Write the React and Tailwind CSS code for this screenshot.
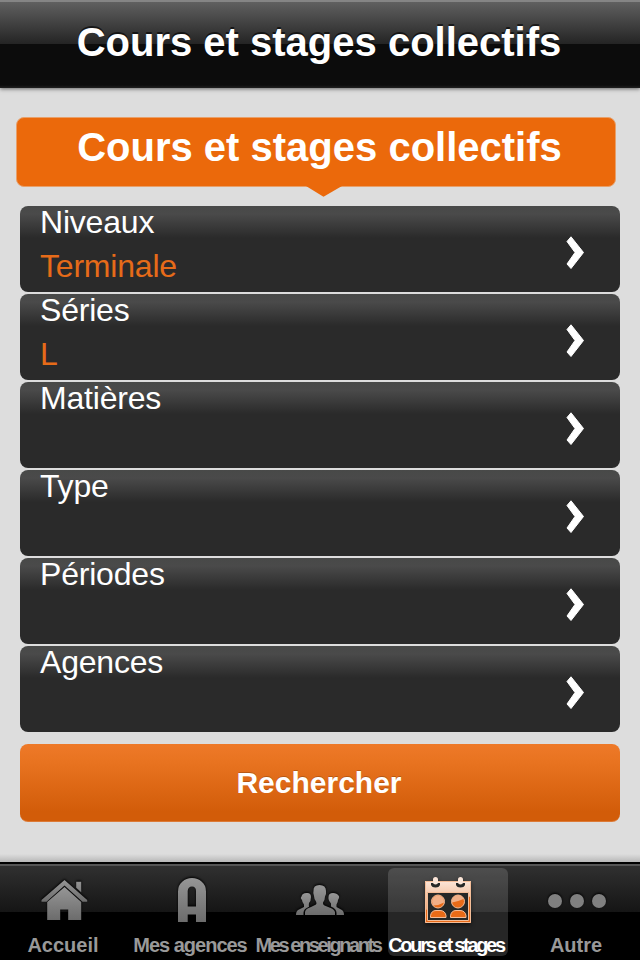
const fields = [
  { label: "Niveaux", value: "Terminale" },
  { label: "Séries", value: "L" },
  { label: "Matières", value: "" },
  { label: "Type", value: "" },
  { label: "Périodes", value: "" },
  { label: "Agences", value: "" },
];

function Gradient({ id }) {
  return (
    <linearGradient id={id} x1="0" y1="0" x2="0" y2="1">
      <stop offset="0" stopColor="#969696" />
      <stop offset="1" stopColor="#6c6c6c" />
    </linearGradient>
  );
}

function HomeIcon() {
  return (
    <svg viewBox="0 0 48 48" className="h-12 w-12 drop-shadow-[0_-1px_1px_#000]">
      <defs><Gradient id="home" /></defs>
      <g fill="url(#home)">
        <path d="M24.500 4 47.200 24v1.800h-4.700L24.500 9.500 6.500 25.800H1.500V24zM36.200 5.700h5v10.500l-5-4.500z" />
        <path d="M24.500 11 41.200 26V44H28.200V33.500h-8V44H7.200V26z" />
      </g>
    </svg>
  );
}

function AgencyIcon() {
  return (
    <svg viewBox="0 0 48 48" className="h-12 w-12 drop-shadow-[0_-1px_1px_#000]">
      <defs><Gradient id="agency" /></defs>
      <path fill="url(#agency)" fillRule="evenodd" d="M10 46V15.500Q10 9 14.500 5.500Q18 2 24 2Q30 2 33.500 5.500Q38 9 38 15.500V46H28V38.500H19.700V46zM19.700 30.500H28V15q0-4.500-4-4.500t-4.300 4.500z" />
    </svg>
  );
}

function TeachersIcon() {
  return (
    <svg viewBox="0 0 48 48" className="h-12 w-12 drop-shadow-[0_-1px_1px_#000]">
      <defs><Gradient id="people" /></defs>
      <g fill="url(#people)">
        <path d="M9 39V36Q9.500 32.500 15 31L20 28.500Q21 27.500 20 25.500Q18 23 18 20Q16.800 17 17.500 15Q17 9 23.500 9Q30 9 30 15Q30.500 18 29 20.500Q29 24 27 26.500Q26.500 28.500 28.500 29.500L34 31.700Q38 33 39 36V39z" />
        <path d="M0 39Q0 34.500 3 33.500L8 31V28.500Q6 26 6 24Q4 22 5.500 20.500Q6 17 10.500 17Q15 16.500 15 21Q15 25 13 27Q12.500 30 13 30.700Q7.500 32.700 7.500 37V39z" />
        <path d="M48 39Q48 34.500 45 33.500L40.500 31V28.500Q42 26 42 24Q44 21 42.500 19.500Q41 17 37 17Q32.500 17 32.500 21Q32 24 35 27.500V30.500Q40.500 32.500 40.500 37V39z" />
      </g>
    </svg>
  );
}

function CalendarIcon() {
  return (
    <svg viewBox="0 0 50 50" className="h-[50px] w-[50px] drop-shadow-[0_2px_2px_#0008]">
      <defs>
        <linearGradient id="paper" x1="0" y1="0" x2="0" y2="1">
          <stop offset="0" stopColor="#fbe5d8" />
          <stop offset="1" stopColor="#efa878" />
        </linearGradient>
      </defs>
      <path fill="#e96b18" d="M2 5h46v42H2z" />
      <path fill="url(#paper)" d="M2 5h46v15Q33 28 2 34z" />
      <path fill="none" stroke="#f4bd98" d="M2.500 5.500h45v41h-45z" />
      <path fill="#262827" stroke="#f4bd98" d="M4.500 16.500h41v28h-41z" />
      <path fill="#262827" d="M8 7h9v2q-1 2.500-4.500 2.500T8 9zM33 7h9v2q-1 2.500-4.500 2.500T33 9z" />
      <path fill="#fbe5d8" d="M10 3.500Q10 1 12.500 1T15 3.500v3q0 2-2.500 2T10 6.500zM35 3.500Q35 1 37.500 1T40 3.500v3q0 2-2.500 2T35 6.500z" />
      <g fill="#e96b18" stroke="#f4bd98">
        <circle cx="15" cy="25.500" r="6.500" />
        <circle cx="35" cy="25.500" r="6.500" />
        <path d="M7.500 41.500v-2q1-5 5.500-5h4q5 0 6 5v2zM27.500 41.500v-2q1-5 5.500-5h4q5 0 6 5v2z" />
      </g>
      <path fill="#f2b088" d="M9 25.500a6 6 0 0 1 12 0v1Q16 29.500 10 29.500zM29 24a6 6 0 0 1 11.500-1Q35 25.500 29 26.500z" />
    </svg>
  );
}

function MoreIcon() {
  return (
    <svg viewBox="0 0 60 48" className="h-12 w-[60px] drop-shadow-[0_-1px_1px_#000]">
      <g fill="#808080">
        <circle cx="9" cy="25" r="7" />
        <circle cx="31" cy="25" r="7" />
        <circle cx="53" cy="25" r="7" />
      </g>
    </svg>
  );
}

function Tab({ icon, label, active, labelClass }) {
  return (
    <div className="flex w-32 justify-center pt-1">
      <div className={`flex h-[88px] w-[120px] flex-col items-center rounded-md pt-2 ${active ? "bg-white/15 text-white" : "text-[#999]"}`}>
        <div className="flex h-[50px] shrink-0">{icon}</div>
        <div className={`mt-[7px] shrink-0 text-xl leading-6 font-bold whitespace-nowrap ${labelClass}`}>{label}</div>
      </div>
    </div>
  );
}

export default function App() {
  return (
    <div className="flex h-[960px] w-[640px] flex-col overflow-hidden bg-[#ddd] font-['Liberation_Sans',Arial,sans-serif]">
      <header className="flex h-[88px] shrink-0 justify-center border-t-2 border-[#858585] bg-[linear-gradient(#606060_0,#242424_42px,#0c0c0c_42px,#0c0c0c_83px,#202020_86px)] pt-[17px] shadow-[0_1px_4px_#0008]">
        <h1 className="pr-0.5 text-[40px] leading-[46px] font-bold whitespace-nowrap text-white [text-shadow:0_-2px_0_#0009]">Cours et stages collectifs</h1>
      </header>

      <main className="flex grow flex-col">
        <div className="mt-[29px] ml-4 w-[600px]">
          <div className="flex h-[70px] justify-center rounded-lg border border-[#e8a06a] bg-[#eb690b] pt-1.5">
            <h2 className="pl-[7px] text-[40px] leading-[46px] font-bold whitespace-nowrap text-white">Cours et stages collectifs</h2>
          </div>
          <svg viewBox="0 0 36 12" className="-mt-px ml-[290px] h-3 w-9">
            <path fill="#eb690b" d="M0 0h36L17.500 10.800z" />
          </svg>
        </div>

        <div className="mx-5 mt-2 flex flex-col gap-0.5">
          {fields.map((field) => (
            <div key={field.label} className="flex h-[86px] items-center justify-between rounded-lg bg-[linear-gradient(#484948_0,#4a4a4a_8px,#2a2a2a_32px)] pr-[35px] pl-5">
              <div className="flex h-full flex-col text-[32px] leading-9 tracking-[-0.2px]">
                <span className="-mt-0.5 h-11 text-white">{field.label}</span>
                <span className="h-11 text-[#e66b19]">{field.value}</span>
              </div>
              <svg viewBox="0 0 20 36" className="mt-2 h-9 w-5">
                <path fill="#fff" stroke="#fff" strokeLinejoin="round" d="M2 6.500 6 1.800 18.500 17.500 6 33.500 2 29 10 17.500z" />
              </svg>
            </div>
          ))}
        </div>

        <button className="mx-5 mt-3 h-[78px] rounded-lg border-b border-[#dc7a36] bg-[linear-gradient(#ee7928,#e87320_24%,#d25c09_88%)] pr-0.5 text-[30px] font-bold text-white [text-shadow:0_-1px_0_#0003]">Rechercher</button>
        <div className="mt-auto h-2 bg-linear-to-b from-[#ddd] to-[#b8b8b8]" />
      </main>

      <nav className="flex h-[98px] shrink-0 border-t-2 border-black bg-[linear-gradient(#555_0,#555_2px,#303030_2px,#151515_48px,#000_48px)]">
        <Tab icon={<HomeIcon />} label="Accueil" labelClass="-ml-0.5" />
        <Tab icon={<AgencyIcon />} label="Mes agences" labelClass="-ml-1 tracking-[-1px]" />
        <Tab icon={<TeachersIcon />} label="Mes enseignants" labelClass="-ml-1 tracking-[-2.4px]" />
        <Tab active icon={<CalendarIcon />} label="Cours et stages" labelClass="-ml-1 tracking-[-2.3px]" />
        <Tab icon={<MoreIcon />} label="Autre" labelClass="" />
      </nav>
    </div>
  );
}
